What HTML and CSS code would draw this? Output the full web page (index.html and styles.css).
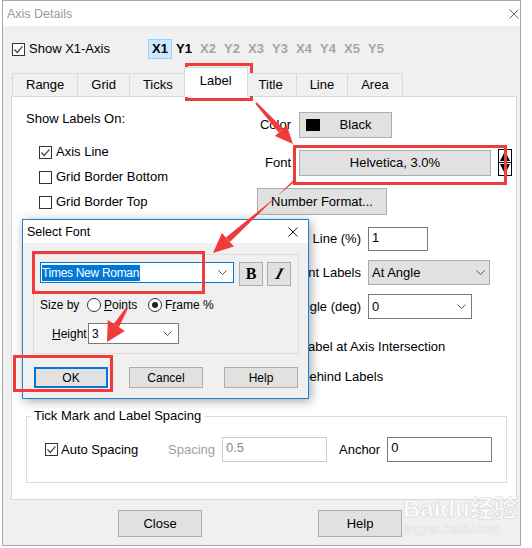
FILE: index.html
```html
<!DOCTYPE html>
<html lang="en">
<head>
    <meta charset="UTF-8">
    <meta name="viewport" content="width=device-width, initial-scale=1.0">
    <title>Axis Details</title>
    <link rel="stylesheet" href="styles.css">
</head>
<body>
    <!-- Axis Details window -->
    <div class="window">
        <div class="titlebar">
            <span class="title">Axis Details</span>
            <svg class="close-x" viewBox="0 0 10 10"><path d="M0.5 0.5L9.5 9.5M9.5 0.5L0.5 9.5"/></svg>
        </div>

        <div class="axisbar">
            <div class="check show-axis">
                <span class="box"><svg viewBox="0 0 11 11"><path d="M1.5 5.5l2.8 3 5.2-6.2"/></svg></span>Show X1-Axis
            </div>
            <div class="axes">
                <span class="axis current">X1</span>
                <span class="axis on">Y1</span>
                <span class="axis">X2</span>
                <span class="axis">Y2</span>
                <span class="axis">X3</span>
                <span class="axis">Y3</span>
                <span class="axis">X4</span>
                <span class="axis">Y4</span>
                <span class="axis">X5</span>
                <span class="axis">Y5</span>
            </div>
        </div>

        <div class="tabs">
            <div class="tab">Range</div>
            <div class="tab">Grid</div>
            <div class="tab">Ticks</div>
            <div class="tab active">Label</div>
            <div class="tab">Title</div>
            <div class="tab">Line</div>
            <div class="tab">Area</div>
        </div>

        <div class="panel">
            <div class="upper">
                <div class="left-col">
                    <div class="heading">Show Labels On:</div>
                    <div class="check-list">
                        <div class="check"><span class="box"><svg viewBox="0 0 11 11"><path d="M1.5 5.5l2.8 3 5.2-6.2"/></svg></span>Axis Line</div>
                        <div class="check"><span class="box"></span>Grid Border Bottom</div>
                        <div class="check"><span class="box"></span>Grid Border Top</div>
                    </div>
                </div>

                <div class="right-col">
                    <div class="row">
                        <span class="lbl">Color</span>
                        <div class="btn color-btn"><span class="swatch"></span><span class="btn-text">Black</span></div>
                    </div>
                    <div class="row font-row">
                        <span class="lbl">Font</span>
                        <div class="btn font-btn">Helvetica, 3.0%</div>
                        <svg class="spin" viewBox="0 0 14 27">
                            <rect x="0.5" y="0.5" width="13" height="26" fill="#fff" stroke="#000"/>
                            <polygon points="7,2 12,12 2,12" fill="#000"/>
                            <line x1="1" y1="13.5" x2="13" y2="13.5" stroke="#000"/>
                            <polygon points="2,15 12,15 7,25" fill="#000"/>
                        </svg>
                    </div>
                    <div class="btn numfmt">Number Format...</div>
                    <div class="row wide offset-row">
                        <span class="lbl">Label Position on Line (%)</span>
                        <div class="field offset">1</div>
                    </div>
                    <div class="row wide">
                        <span class="lbl">Orient Labels</span>
                        <div class="combo grey orient">At Angle<svg class="chev" viewBox="0 0 9 5"><path d="M0.5 0.5l4 4 4-4"/></svg></div>
                    </div>
                    <div class="row wide">
                        <span class="lbl">Label Angle (deg)</span>
                        <div class="combo angle">0<svg class="chev" viewBox="0 0 9 5"><path d="M0.5 0.5l4 4 4-4"/></svg></div>
                    </div>
                    <div class="check opt-first"><span class="box"></span>Use Label at Axis Intersection</div>
                    <div class="check opt-second"><span class="box"></span>Grid behind Labels</div>
                </div>
            </div>

            <fieldset class="spacing">
                <legend>Tick Mark and Label Spacing</legend>
                <div class="spacing-row">
                    <div class="check auto"><span class="box"><svg viewBox="0 0 11 11"><path d="M1.5 5.5l2.8 3 5.2-6.2"/></svg></span>Auto Spacing</div>
                    <span class="dim">Spacing</span>
                    <div class="field disabled">0.5</div>
                    <span class="anchor-lbl">Anchor</span>
                    <div class="field anchor">0</div>
                </div>
            </fieldset>
        </div>

        <div class="buttons">
            <div class="btn main-btn">Close</div>
            <div class="btn main-btn">Help</div>
        </div>
    </div>

    <!-- Select Font dialog on top of the window -->
    <div class="font-dialog">
        <div class="dlg-title">
            <span>Select Font</span>
            <svg class="close-x dark" viewBox="0 0 10 10"><path d="M0.5 0.5L9.5 9.5M9.5 0.5L0.5 9.5"/></svg>
        </div>
        <div class="dlg-group">
            <div class="font-pick">
                <div class="combo focus font-name"><span class="sel">Times New Roman</span><svg class="chev" viewBox="0 0 9 5"><path d="M0.5 0.5l4 4 4-4"/></svg></div>
                <div class="style-btn bold">B</div>
                <div class="style-btn italic"><span>I</span></div>
            </div>
            <div class="size-by">
                <span class="size-lbl">Size by</span>
                <span class="radio-item points"><span class="radio"></span><span><u>P</u>oints</span></span>
                <span class="radio-item"><span class="radio on"></span><span>F<u>r</u>ame %</span></span>
            </div>
            <div class="height-row">
                <span class="height-lbl"><u>H</u>eight</span>
                <div class="combo height">3<svg class="chev" viewBox="0 0 9 5"><path d="M0.5 0.5l4 4 4-4"/></svg></div>
            </div>
        </div>
        <div class="dlg-buttons">
            <div class="btn dlg-btn default">OK</div>
            <div class="btn dlg-btn">Cancel</div>
            <div class="btn dlg-btn">Help</div>
        </div>
    </div>

    <!-- red markup drawn over the screenshot -->
    <svg class="marks" viewBox="0 0 532 548">
        <g fill="none" stroke="#f03b3b" stroke-width="3">
            <rect x="186.5" y="64.5" width="65" height="35"/>
            <rect x="294.5" y="146.5" width="211" height="37"/>
            <rect x="33.5" y="252.5" width="170" height="40"/>
            <rect x="14.5" y="356.5" width="97" height="34"/>
        </g>
        <g fill="#f03b3b">
            <polygon points="256.7,102.3 283.1,128.6 278.7,132.6 255.3,103.7"/>
            <polygon points="275,136 286.8,125.2 293,144"/>
            <polygon points="293.3,180.3 229.9,241.9 225.9,237.5 294.7,181.7"/>
            <polygon points="221.9,233 233.9,246.4 213,253"/>
            <polygon points="126.1,307.5 127.9,308.5 118.9,327.2 113.7,324"/>
            <polygon points="107.8,320 124.9,331 107,342"/>
        </g>
    </svg>

    <div class="watermark">
        <div class="wm-logo">Baidu经验</div>
        <div class="wm-url">jingyan.baidu.com</div>
    </div>
</body>
</html>
```

FILE: styles.css
```css
* {
    box-sizing: border-box;
}

body {
    margin: 0;
    width: 532px;
    height: 548px;
    overflow: hidden;
    position: relative;
    background: #fff;
    font-family: "Liberation Sans", Arial, sans-serif;
    font-size: 13px;
    line-height: 16px;
    color: #000;
}

/* ---------- main window ---------- */

.window {
    margin-left: 2px;
    width: 519px;
    height: 546px;
    border: 1px solid #a8a8a8;
    background: #f0f0f0;
    display: flex;
    flex-direction: column;
}

.titlebar {
    flex: none;
    height: 25px;
    background: #fff;
    display: flex;
    align-items: center;
    justify-content: space-between;
    padding-left: 4px;
}

.titlebar .title {
    color: #9a9a9a;
    font-size: 12.5px;
}

.close-x {
    width: 10px;
    height: 10px;
    margin-right: 1px;
}

.close-x path {
    stroke: #666;
    stroke-width: 1;
    fill: none;
}

.close-x.dark path {
    stroke: #222;
}

.axisbar {
    flex: none;
    margin-top: 12px;
    height: 22px;
    padding-left: 9px;
    display: flex;
    align-items: center;
}

.check {
    display: flex;
    align-items: center;
    gap: 4px;
    white-space: nowrap;
}

.box {
    flex: none;
    width: 13px;
    height: 13px;
    border: 1px solid #333;
    background: #fff;
    display: flex;
}

.box svg {
    width: 11px;
    height: 11px;
}

.box path {
    fill: none;
    stroke: #444;
    stroke-width: 1.2;
}

.show-axis {
    width: 136px;
}

.axes {
    display: flex;
}

.axis {
    width: 24px;
    height: 20px;
    line-height: 20px;
    text-align: center;
    font-weight: bold;
    color: #a6a6a6;
}

.axis.on {
    color: #000;
}

.axis.current {
    color: #000;
    background: #cce8ff;
    border: 1px solid #99d1ff;
    line-height: 18px;
}

/* ---------- tabs ---------- */

.tabs {
    flex: none;
    position: relative;
    z-index: 1;
    margin-top: 7px;
    height: 30px;
    padding-left: 9px;
    display: flex;
    align-items: flex-start;
}

.tab {
    margin-top: 6px;
    height: 23px;
    margin-left: -1px;
    padding: 0 13px;
    border: 1px solid #d9d9d9;
    border-bottom: none;
    background: #f0f0f0;
    line-height: 22px;
}

.tab:first-child {
    margin-left: 0;
}

.tab.active {
    margin: 0 -2px 0 -3px;
    height: 30px;
    padding: 0 15px;
    background: #fff;
    line-height: 26px;
    position: relative;
    z-index: 2;
}

/* ---------- label panel ---------- */

.panel {
    flex: none;
    margin: -1px 0 0 8px;
    width: 506px;
    height: 404px;
    border: 1px solid #d9d9d9;
    background: #fff;
    display: flex;
    flex-direction: column;
}

.upper {
    display: flex;
    padding: 15px 0 0 14px;
}

.left-col {
    width: 231px;
    flex: none;
}

.heading {
    line-height: 14px;
}

.check-list {
    margin-top: 18px;
    padding-left: 13px;
    display: flex;
    flex-direction: column;
    gap: 9px;
}

.right-col {
    display: flex;
    flex-direction: column;
    align-items: flex-start;
}

.row {
    display: flex;
    align-items: center;
}

.lbl {
    width: 34px;
    margin-right: 8px;
    display: flex;
    justify-content: flex-end;
    white-space: nowrap;
}

.row.wide .lbl {
    width: 104px;
    margin-right: 7px;
}

.btn {
    background: #e1e1e1;
    border: 1px solid #adadad;
    display: flex;
    align-items: center;
    justify-content: center;
    white-space: nowrap;
}

.color-btn {
    width: 93px;
    height: 26px;
    justify-content: flex-start;
}

.swatch {
    width: 14px;
    height: 12px;
    margin-left: 6px;
    background: #000;
}

.btn-text {
    flex: 1;
    text-align: center;
}

.font-row {
    margin-top: 11px;
}

.font-btn {
    width: 192px;
    height: 26px;
}

.spin {
    margin-left: 7px;
    width: 14px;
    height: 27px;
}

.numfmt {
    margin-top: 12px;
    width: 130px;
    height: 27px;
}

.offset-row {
    margin-top: 12px;
}

.row.wide + .row.wide {
    margin-top: 9px;
}

.field {
    height: 24px;
    border: 1px solid #7a7a7a;
    background: #fff;
    padding: 2px 3px;
}

.offset {
    width: 60px;
}

.combo {
    height: 25px;
    border: 1px solid #7a7a7a;
    background: #fff;
    display: flex;
    align-items: center;
    justify-content: space-between;
    padding: 0 5px 0 3px;
}

.combo.grey {
    background: #e1e1e1;
    border-color: #adadad;
}

.chev {
    width: 9px;
    height: 5px;
}

.chev path {
    fill: none;
    stroke: #555;
    stroke-width: 1;
}

.orient {
    width: 122px;
    padding-right: 4px;
}

.angle {
    width: 104px;
}

.opt-first {
    margin-top: 20px;
}

.opt-second {
    margin-top: 14px;
}

.spacing {
    margin: auto 9px 16px 14px;
    padding: 13px 12px 20px 4px;
    border: 1px solid #dcdcdc;
    min-inline-size: 0;
}

.spacing legend {
    padding: 0 3px;
    line-height: 16px;
}

.spacing-row {
    margin-left: 14px;
    display: flex;
    align-items: center;
}

.spacing-row .check {
    gap: 3px;
}

.auto {
    width: 123px;
}

.dim {
    color: #a0a0a0;
    margin-right: 7px;
}

.field.disabled {
    width: 105px;
    height: 25px;
    border-color: #cccccc;
    color: #8a8a8a;
}

.anchor-lbl {
    margin: 0 7px 0 12px;
}

.field.anchor {
    width: 105px;
    height: 25px;
}

.buttons {
    flex: none;
    display: flex;
    gap: 116px;
    padding: 10px 0 0 115px;
}

.main-btn {
    width: 84px;
    height: 27px;
}

/* ---------- Select Font dialog ---------- */

.font-dialog {
    position: absolute;
    left: 22px;
    top: 219px;
    width: 287px;
    height: 180px;
    border: 1px solid #1883d7;
    background: #f0f0f0;
    box-shadow: 2px 2px 10px rgba(0, 0, 0, 0.35);
    font-size: 12px;
    line-height: 16px;
    display: flex;
    flex-direction: column;
}

.dlg-title {
    height: 23px;
    background: #fff;
    display: flex;
    align-items: center;
    justify-content: space-between;
    padding: 0 9px 0 4px;
    font-size: 12.5px;
}

.dlg-group {
    margin: 11px 0 0 10px;
    width: 266px;
    height: 100px;
    border: 1px solid #dcdcdc;
    padding: 7px 0 0 6px;
}

.font-pick {
    display: flex;
    align-items: flex-start;
}

.combo.focus {
    border-color: #0078d7;
}

.font-name {
    width: 194px;
    height: 21px;
    padding: 0 6px 0 1px;
}

.sel {
    background: #0078d7;
    color: #fff;
    letter-spacing: -0.3px;
    padding-right: 1px;
}

.style-btn {
    width: 24px;
    height: 24px;
    margin-left: 4px;
    background: #e1e1e1;
    border: 1px solid #adadad;
    display: flex;
    align-items: center;
    justify-content: center;
    font-family: "Liberation Serif", "Times New Roman", serif;
    font-weight: bold;
    font-size: 16px;
}

.style-btn.bold {
    margin-left: 5px;
}

.style-btn.italic span {
    display: inline-block;
    font-style: italic;
    transform: skewX(-18deg);
}

.size-by {
    margin-top: 11px;
    display: flex;
    align-items: center;
}

.size-lbl {
    width: 47px;
}

.radio-item {
    display: flex;
    align-items: center;
    gap: 3px;
}

.radio-item.points {
    width: 61px;
}

.radio {
    width: 14px;
    height: 14px;
    border: 1px solid #333;
    border-radius: 50%;
    background: #fff;
    display: flex;
    align-items: center;
    justify-content: center;
}

.radio.on::after {
    content: "";
    width: 6px;
    height: 6px;
    border-radius: 50%;
    background: #222;
}

.height-row {
    margin: 10px 0 0 12px;
    display: flex;
    align-items: center;
}

.height-lbl {
    width: 36px;
}

.combo.height {
    width: 91px;
    height: 21px;
    padding: 0 6px 0 3px;
}

.dlg-buttons {
    margin-top: 13px;
    padding-left: 11px;
    display: flex;
    gap: 21px;
}

.dlg-btn {
    width: 74px;
    height: 21px;
}

.dlg-btn.default {
    border: 2px solid #0078d7;
}

/* ---------- overlays ---------- */

.marks {
    position: absolute;
    left: 0;
    top: 0;
    width: 532px;
    height: 548px;
    pointer-events: none;
}

.watermark {
    position: absolute;
    left: 403px;
    top: 495px;
    color: rgba(255, 255, 255, 0.9);
    -webkit-text-stroke: 1px rgba(190, 190, 190, 0.4);
    font-family: "Liberation Sans", "Noto Sans CJK SC", sans-serif;
    pointer-events: none;
}

.wm-logo {
    font-size: 24px;
    line-height: 28px;
    font-weight: bold;
}

.wm-url {
    font-size: 12px;
    line-height: 12px;
    -webkit-text-stroke: 0.6px rgba(190, 190, 190, 0.4);
}
```
